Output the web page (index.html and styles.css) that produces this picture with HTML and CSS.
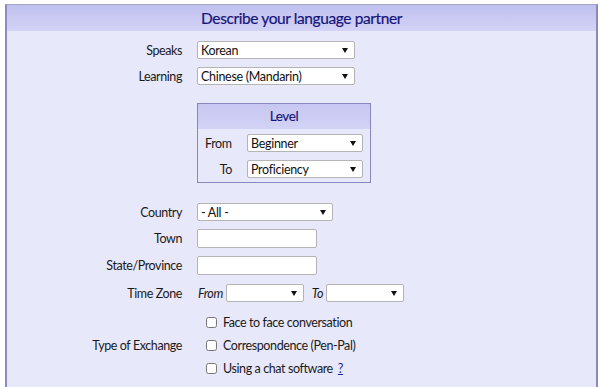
FILE: index.html
```html
<!DOCTYPE html>
<html>
<head>
  <title>Describe your language partner</title>
  <link rel="stylesheet" href="styles.css">
</head>
<body>

  <div class="panel">
    <h1 class="panel-title">Describe your language partner</h1>

    <div class="form">
      <div class="row">
        <label class="lbl">Speaks</label>
        <select class="sel wide"><option>Korean</option></select>
      </div>
      <div class="row">
        <label class="lbl">Learning</label>
        <select class="sel wide"><option>Chinese (Mandarin)</option></select>
      </div>

      <!-- Level box -->
      <div class="row level-row">
        <span></span>
        <div class="level">
          <div class="level-title">Level</div>
          <div class="level-body">
            <div class="level-line">
              <label class="lbl">From</label>
              <select class="sel lvl"><option>Beginner</option></select>
            </div>
            <div class="level-line">
              <label class="lbl">To</label>
              <select class="sel lvl"><option>Proficiency</option></select>
            </div>
          </div>
        </div>
      </div>

      <div class="row">
        <label class="lbl">Country</label>
        <select class="sel country"><option>- All -</option></select>
      </div>
      <div class="row">
        <label class="lbl">Town</label>
        <input type="text" class="txt">
      </div>
      <div class="row">
        <label class="lbl">State/Province</label>
        <input type="text" class="txt">
      </div>
      <div class="row tz-row">
        <label class="lbl">Time Zone</label>
        <div class="tz">
          <em>From</em>
          <select class="sel tz-sel"><option></option></select>
          <em class="tz-to">To</em>
          <select class="sel tz-sel"><option></option></select>
        </div>
      </div>

      <div class="row exch-row">
        <label class="lbl">Type of Exchange</label>
        <div class="checks">
          <label class="chk"><input type="checkbox"> Face to face conversation</label>
          <label class="chk"><input type="checkbox"> Correspondence (Pen-Pal)</label>
          <label class="chk"><input type="checkbox"> Using a chat software <a href="#" class="help">?</a></label>
        </div>
      </div>
    </div>
  </div>

</body>
</html>
```

FILE: styles.css
```css
body {
  margin: 0;
  background: #ffffff;
  font-family: "Lato", "Liberation Sans", sans-serif;
  font-size: 12.5px;
  letter-spacing: -0.4px;
  color: #1a1a1a;
}

.panel {
  margin: 4px 2px 0 5px;
  height: 400px;
  background: #e8e8fb;
  border: 1px solid #a4a4c8;
  border-left: 2px solid #8c8cbf;
  border-right: 2px solid #8a8ab8;
  border-bottom: none;
}

.panel-title {
  margin: 0;
  height: 26px;
  line-height: 26px;
  text-align: center;
  font-size: 15.5px;
  font-weight: normal;
  letter-spacing: -0.4px;
  color: #15157a;
  -webkit-text-stroke: 0.2px #15157a;
  background: linear-gradient(#c0c0ef, #d3d3f6);
}

.form {
  padding-top: 10px;
}

.row {
  display: grid;
  grid-template-columns: 175px auto;
  column-gap: 15px;
  align-items: center;
  justify-content: start;
  margin-bottom: 8px;
}

.lbl {
  text-align: right;
}

.sel {
  appearance: none;
  -webkit-appearance: none;
  height: 18px;
  padding: 0 14px 0 3px;
  font-family: inherit;
  font-size: 12.5px;
  letter-spacing: -0.3px;
  color: #111;
  border: 1px solid #b4b4b4;
  border-radius: 2px;
  background: #fff url("data:image/svg+xml,%3Csvg xmlns='http://www.w3.org/2000/svg' width='6' height='5'%3E%3Cpath d='M0 0h6L3 5z' fill='%23111'/%3E%3C/svg%3E") no-repeat right 6px center;
}

.wide { width: 158px; }
.country { width: 136px; }
.lvl { width: 116px; }
.tz-sel { width: 78px; }

.level-row {
  margin-top: 18px;
  margin-bottom: 20px;
}

.level {
  width: 172px;
  border: 1px solid #8888bd;
  background: #e8e8fb;
}

.level-title {
  height: 25px;
  line-height: 25px;
  text-align: center;
  font-size: 13.5px;
  color: #15157a;
  -webkit-text-stroke: 0.15px #15157a;
  background: linear-gradient(#c6c6f1, #d3d3f6);
}

.level-body {
  padding: 5px 0 4px;
}

.level-line {
  display: grid;
  grid-template-columns: 34px auto;
  column-gap: 15px;
  align-items: center;
  margin-bottom: 8px;
}

.level-line:first-child .lbl {
  text-align: left;
  padding-left: 7px;
}

.level-line:last-child {
  margin-bottom: 0;
}

.txt {
  width: 120px;
  height: 19px;
  box-sizing: border-box;
  border: 1px solid #b4b4b4;
  border-radius: 2px;
  background: #fff;
  margin: 0;
}

.tz-row {
  margin-top: 9px;
}

.tz {
  display: flex;
  align-items: center;
}

.tz em {
  margin-left: 1px;
  margin-right: 3px;
}

.tz .tz-to {
  margin-left: 8px;
}

.exch-row {
  margin-top: 11px;
}

.checks {
  display: flex;
  flex-direction: column;
  gap: 5px;
  padding-left: 9px;
}

.chk {
  display: flex;
  align-items: center;
  height: 18px;
}

.chk input {
  width: 11px;
  height: 11px;
  margin: 0 6px 0 0;
}

.help {
  margin-left: 5px;
  color: #1c1c9c;
}
```
